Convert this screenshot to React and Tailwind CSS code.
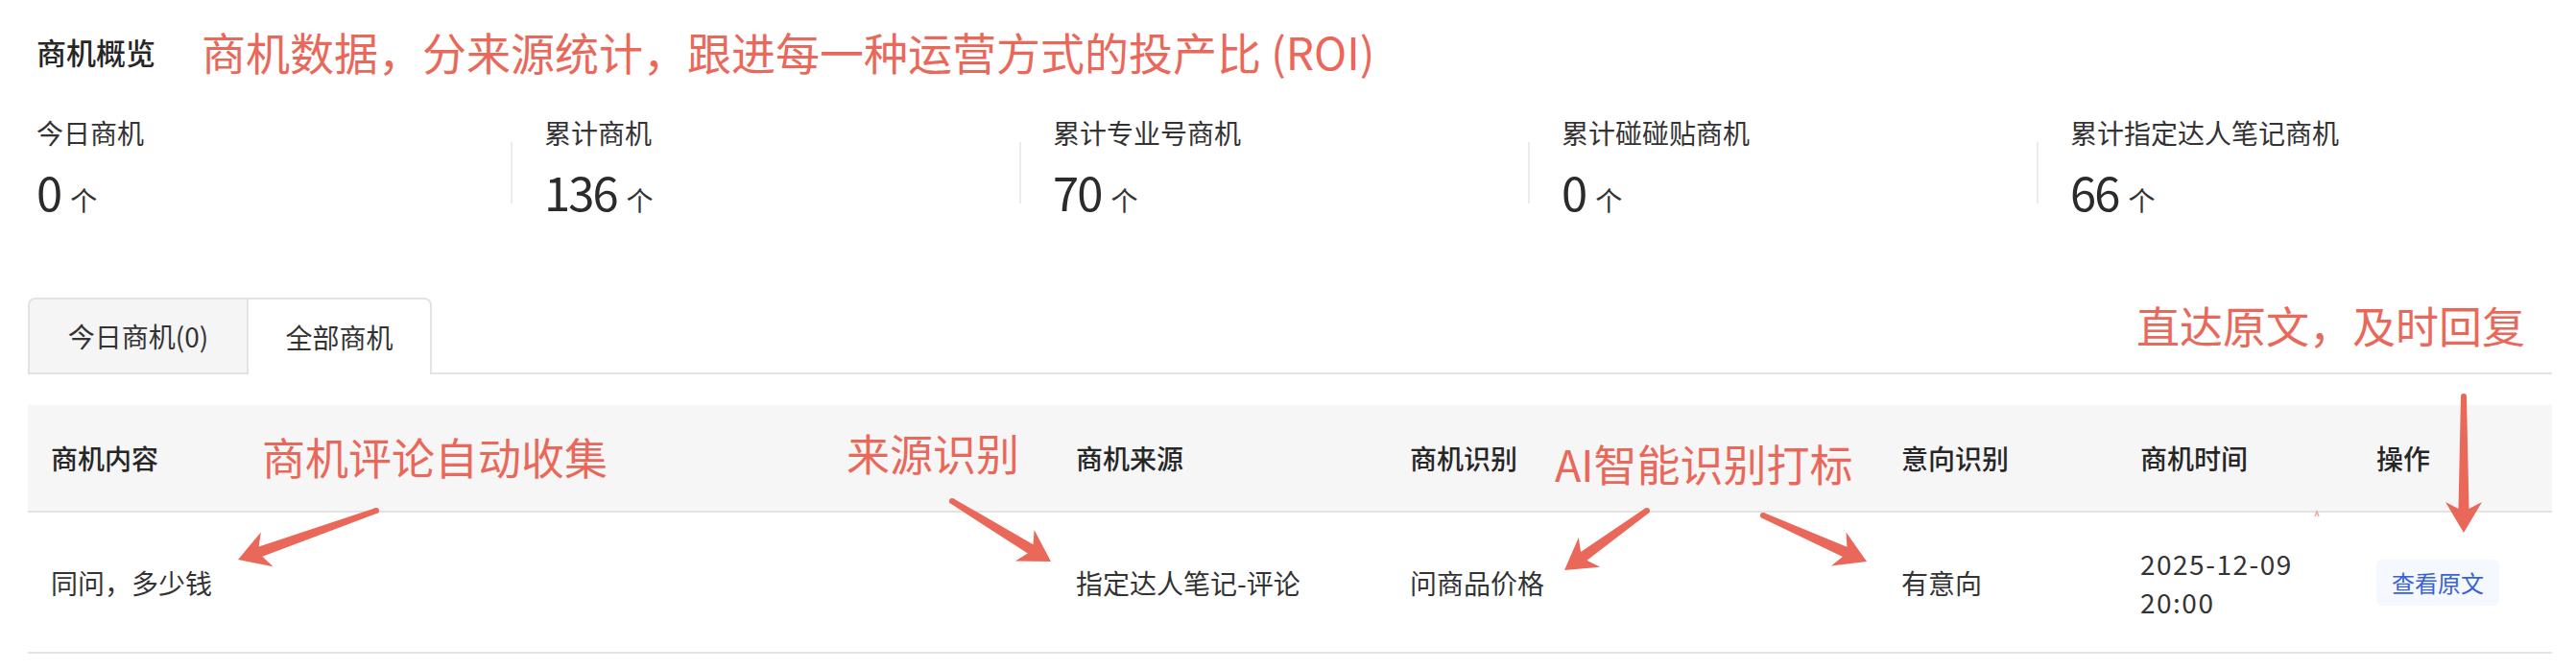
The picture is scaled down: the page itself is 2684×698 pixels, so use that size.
import React from 'react';

// 商机概览 screenshot: stats strip, tabs, one-row table, plus red annotation arrows on top.

const RED = '#e9685a';

const stats = [
  { label: '今日商机', value: '0' },
  { label: '累计商机', value: '136' },
  { label: '累计专业号商机', value: '70' },
  { label: '累计碰碰贴商机', value: '0' },
  { label: '累计指定达人笔记商机', value: '66' },
];

const cols = [
  { title: '商机内容', w: 'w-[1068px]' },
  { title: '商机来源', w: 'w-[348px]' },
  { title: '商机识别', w: 'w-[512px]' },
  { title: '意向识别', w: 'w-[249px]' },
  { title: '商机时间', w: 'w-[246px]' },
  { title: '操作', w: 'w-[207px]' },
];

// tapered shaft + barbed head, points worked out from tail/tip
function arrowPoints(x1, y1, x2, y2, tw = 6, sw = 11, hw = 38, hl = 32) {
  const len = Math.hypot(x2 - x1, y2 - y1);
  const dx = (x2 - x1) / len;
  const dy = (y2 - y1) / len;
  const nx = -dy;
  const ny = dx;
  const bx = x2 - dx * hl;
  const by = y2 - dy * hl;
  const ix = x2 - dx * (hl - 7);
  const iy = y2 - dy * (hl - 7);
  const p = [
    [x1 + nx * tw / 2, y1 + ny * tw / 2],
    [ix + nx * sw / 2, iy + ny * sw / 2],
    [bx + nx * hw / 2, by + ny * hw / 2],
    [x2, y2],
    [bx - nx * hw / 2, by - ny * hw / 2],
    [ix - nx * sw / 2, iy - ny * sw / 2],
    [x1 - nx * tw / 2, y1 - ny * tw / 2],
  ];
  return p.map(([a, b]) => `${a.toFixed(1)},${b.toFixed(1)}`).join(' ');
}

const arrows = [
  [392, 532, 248, 583],
  [992, 522, 1095, 585],
  [1716, 532, 1630, 594],
  [1837, 537, 1945, 585],
  [2567, 413, 2567, 555],
];

function Arrows() {
  return (
    <svg className="absolute inset-0 pointer-events-none" width="2684" height="698" viewBox="0 0 2684 698">
      {arrows.map(([x1, y1, x2, y2], i) => (
        <g key={i} fill={RED}>
          <polygon points={arrowPoints(x1, y1, x2, y2)} />
          <circle cx={x1} cy={y1} r="3" />
        </g>
      ))}
      <polyline points="2412,538 2414,533 2416,538" fill="none" stroke="#f2a49a" strokeWidth="1.5" />
    </svg>
  );
}

export default function App() {
  return (
    <div className="relative w-[2684px] h-[698px] bg-white overflow-hidden font-['Noto_Sans_CJK_SC',sans-serif] text-[#333]">
      <div className="pl-[29px] pr-[25px]">
        <div className="pl-[9px]">
          <div className="flex items-center gap-[48px] pt-[26px] h-[82px]">
            <h1 className="text-[31px] leading-[46px] font-medium text-[#262626]">商机概览</h1>
            <span className="text-[46px] leading-[54px] -mt-[3px] text-[#e9685a]">商机数据，分来源统计，跟进每一种运营方式的投产比 (ROI)</span>
          </div>

          <div className="flex mt-[36px]">
            {stats.map((s, i) => (
              <div key={s.label} className={i === 0 ? 'w-[494px]' : 'w-[530px] flex'}>
                {i > 0 && <div className="w-[2px] h-[64px] mt-[30px] bg-[#ececec]" />}
                <div className={i > 0 ? 'pl-[33px]' : ''}>
                  <div className="text-[28px] leading-[40px]">{s.label}</div>
                  <div className="flex items-baseline mt-[13px]">
                    <span className="text-[49px] leading-[56px] tracking-[-2px] text-[#2b2b2b]">{s.value}</span>
                    <span className="text-[28px] ml-[10px] text-[#333]">个</span>
                  </div>
                </div>
              </div>
            ))}
          </div>
        </div>

        <div className="flex mt-[81px] border-b-2 border-[#e3e3e3]">
          <div className="flex items-center justify-center w-[228px] h-[78px] bg-[#f5f5f5] border-2 border-b-0 border-r-0 border-[#e3e3e3] rounded-tl-[8px] text-[28px]">
            今日商机(0)
          </div>
          <div className="flex items-center justify-center w-[193px] h-[80px] -mb-[2px] bg-white border-2 border-b-0 border-[#e3e3e3] rounded-tr-[8px] text-[28px]">
            全部商机
          </div>
        </div>

        <div className="mt-[32px]">
          <div className="flex h-[112px] bg-[#f6f6f6] border-b-2 border-[#e3e3e3]">
            {cols.map((c) => (
              <div key={c.title} className={`${c.w} flex items-center pl-[24px] text-[28px] font-medium text-[#262626]`}>
                {c.title}
              </div>
            ))}
          </div>
          <div className="flex h-[147px] border-b-2 border-[#e3e3e3] text-[28px]">
            <div className="w-[1068px] flex items-center pl-[24px]">同问，多少钱</div>
            <div className="w-[348px] flex items-center pl-[24px]">指定达人笔记-评论</div>
            <div className="w-[512px] flex items-center pl-[24px]">问商品价格</div>
            <div className="w-[249px] flex items-center pl-[24px]">有意向</div>
            <div className="w-[246px] flex flex-col justify-center pl-[24px] leading-[40px] tracking-[1.5px]">
              <span>2025-12-09</span>
              <span>20:00</span>
            </div>
            <div className="w-[207px] flex items-center pl-[24px]">
              <button className="h-[48px] px-[16px] rounded-[6px] bg-[#f5f8ff] text-[24px] text-[#3a62d7]">查看原文</button>
            </div>
          </div>
        </div>
      </div>

      <span className="absolute left-[273px] top-[453px] text-[45px] leading-none text-[#e9685a]">商机评论自动收集</span>
      <span className="absolute left-[882px] top-[449px] text-[45px] leading-none text-[#e9685a]">来源识别</span>
      <span className="absolute left-[1620px] top-[460px] text-[45px] leading-none text-[#e9685a]">AI智能识别打标</span>
      <span className="absolute left-[2226px] top-[316px] text-[45px] leading-none text-[#e9685a]">直达原文，及时回复</span>

      <Arrows />
    </div>
  );
}
